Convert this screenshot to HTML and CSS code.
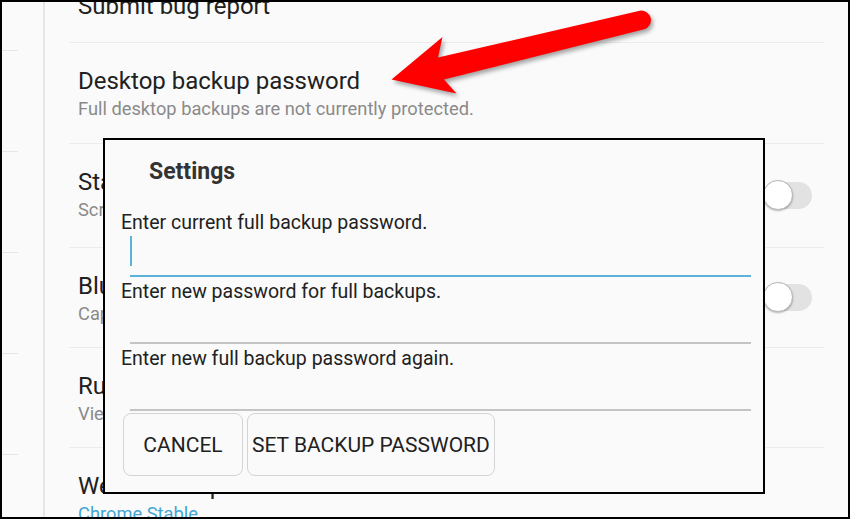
FILE: index.html
```html
<!DOCTYPE html>
<html>
<head>
<meta charset="utf-8">
<link rel="stylesheet" href="styles.css">
</head>
<body>
<div class="frame">
  <aside class="side">
    <div class="side-item first"></div>
    <div class="side-item"></div>
    <div class="side-item"></div>
    <div class="side-item"></div>
    <div class="side-item"></div>
  </aside>
  <main class="main">
    <div class="list">
      <div class="row single"><div class="txt"><div class="title">Submit bug report</div></div></div>
      <div class="row"><div class="txt"><div class="title">Desktop backup password</div><div class="sub">Full desktop backups are not currently protected.</div></div></div>
      <div class="row tall"><div class="txt"><div class="title">Stay awake</div><div class="sub">Screen will never sleep while charging</div></div><div class="toggle"><div class="track"></div><span class="knob"></span></div></div>
      <div class="row std"><div class="txt"><div class="title">Bluetooth HCI snoop log</div><div class="sub">Capture all bluetooth HCI packets in a file</div></div><div class="toggle"><div class="track"></div><span class="knob"></span></div></div>
      <div class="row std"><div class="txt"><div class="title">Running services</div><div class="sub">View and control currently running services</div></div></div>
      <div class="row"><div class="txt"><div class="title">WebView implementation</div><div class="sub link">Chrome Stable</div></div></div>
    </div>
  </main>
  <div class="dialog">
    <div class="dlg-title">Settings</div>
    <div class="field">
      <div class="label">Enter current full backup password.</div>
      <div class="input active"><span class="cursor"></span></div>
    </div>
    <div class="field">
      <div class="label">Enter new password for full backups.</div>
      <div class="input"></div>
    </div>
    <div class="field">
      <div class="label">Enter new full backup password again.</div>
      <div class="input"></div>
    </div>
    <div class="actions">
      <div class="btn">CANCEL</div>
      <div class="btn">SET BACKUP PASSWORD</div>
    </div>
  </div>
  <svg class="arrow" width="850" height="519" viewBox="0 0 850 519">
    <path d="M391.5 79.5 L442.5 37 L438 57.5 L639.7 10.8 A9.5 9.5 0 0 1 644.3 29.2 L444 79.5 L456.5 93.5 Z" fill="#ff0000"/>
  </svg>
</div>
</body>
</html>
```
FILE: styles.css
```css
body {
  margin: 0;
  background: #fafafa;
  font-family: Roboto, "Noto Sans", sans-serif;
}
.frame {
  position: relative;
  width: 850px;
  height: 519px;
  box-sizing: border-box;
  border: 2px solid #000;
  background: #fafafa;
  display: flex;
  overflow: hidden;
}
.side {
  width: 41px;
  flex: none;
  border-right: 2px solid #e6e6e6;
}
.side-item {
  width: 16px;
  height: 101px;
  box-sizing: border-box;
  border-bottom: 1px solid #e6e6e6;
}
.side-item.first {
  height: 49px;
}
.main {
  flex: 1;
  min-width: 0;
  padding: 0 24px;
}
.list {
  margin-top: -35px;
}
.row {
  display: flex;
  align-items: center;
  height: 101px;
  box-sizing: border-box;
  border-top: 1px solid #ececec;
  padding: 0 12px 0 9px;
}
.row.single { height: 75px; }
.row.tall { height: 104px; }
.row.std { height: 100px; }
.txt {
  flex: 1;
  align-self: flex-start;
  padding-top: 24px;
  white-space: nowrap;
}
.title {
  font-size: 24px;
  line-height: 28px;
  color: #212121;
}
.sub {
  font-size: 18.3px;
  line-height: 21px;
  color: #8a8a8a;
  margin-top: 3px;
}
.sub.link { color: #43a6d3; }
.toggle {
  position: relative;
  flex: none;
  width: 49px;
  height: 30px;
}
.track {
  margin: 1px 0 0 2px;
  width: 47px;
  height: 27px;
  border-radius: 14px;
  background: #e2e2e2;
}
.knob {
  position: absolute;
  left: 0;
  top: -1px;
  width: 28px;
  height: 28px;
  border-radius: 50%;
  background: #fff;
  border: 1px solid #b8b8b8;
  box-shadow: 0 1px 2px rgba(0, 0, 0, 0.3);
}
.dialog {
  position: absolute;
  left: 101px;
  top: 136px;
  width: 662px;
  height: 356px;
  box-sizing: border-box;
  border: 2px solid #000;
  background: #fafafa;
  padding: 18px 12px 0 16px;
}
.dlg-title {
  margin-left: 28px;
  font-size: 23px;
  line-height: 28px;
  font-weight: bold;
  color: #333;
  margin-bottom: 26px;
}
.label {
  margin-top: 4px;
  font-size: 19.5px;
  line-height: 22px;
  color: #212121;
  white-space: nowrap;
}
.input {
  margin-left: 9px;
  height: 41px;
  box-sizing: border-box;
  border-bottom: 2px solid #c4c4c4;
}
.input.active { border-bottom-color: #5cb3da; }
.cursor {
  display: block;
  width: 2px;
  height: 30px;
  margin-top: 2px;
  background: #5cb3da;
}
.actions {
  display: flex;
  gap: 4px;
  margin-top: 2px;
  padding-left: 2px;
}
.btn {
  min-width: 120px;
  height: 63px;
  box-sizing: border-box;
  padding: 0 4px;
  border: 1px solid #d4d4d4;
  border-radius: 8px;
  display: flex;
  align-items: center;
  justify-content: center;
  font-size: 21px;
  color: #212121;
  white-space: nowrap;
}
.arrow {
  position: absolute;
  left: -2px;
  top: -2px;
  pointer-events: none;
  filter: drop-shadow(2px 3px 2px rgba(0, 0, 0, 0.35));
}
```
